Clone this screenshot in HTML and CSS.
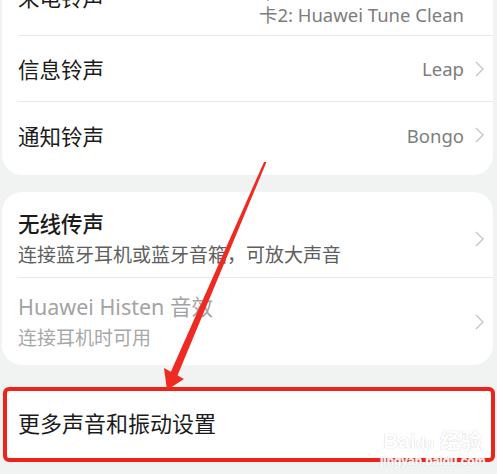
FILE: index.html
```html
<!DOCTYPE html>
<html lang="zh-CN">
<head>
  <meta charset="UTF-8" />
  <meta name="viewport" content="width=device-width, initial-scale=1.0" />
  <title>声音和振动</title>
  <link rel="stylesheet" href="styles.css">
</head>
<body>
  <div class="page">
    <section class="card card-top">
      <div class="row row-first">
        <span class="title">来电铃声</span>
        <div class="values">
          <span class="value">卡1: Huawei Tune Clean</span>
          <span class="value">卡2: Huawei Tune Clean</span>
        </div>
        <svg class="chev" viewBox="0 0 9 16"><path d="M1 1l7 7-7 7" /></svg>
      </div>
      <div class="row">
        <span class="title">信息铃声</span>
        <span class="value">Leap</span>
        <svg class="chev" viewBox="0 0 9 16"><path d="M1 1l7 7-7 7" /></svg>
      </div>
      <div class="row">
        <span class="title">通知铃声</span>
        <span class="value">Bongo</span>
        <svg class="chev" viewBox="0 0 9 16"><path d="M1 1l7 7-7 7" /></svg>
      </div>
    </section>

    <section class="card">
      <div class="row row-tall">
        <div class="text">
          <span class="title">无线传声</span>
          <span class="sub">连接蓝牙耳机或蓝牙音箱，可放大声音</span>
        </div>
        <svg class="chev" viewBox="0 0 9 16"><path d="M1 1l7 7-7 7" /></svg>
      </div>
      <div class="row row-tall disabled">
        <div class="text">
          <span class="title">Huawei Histen 音效</span>
          <span class="sub">连接耳机时可用</span>
        </div>
        <svg class="chev" viewBox="0 0 9 16"><path d="M1 1l7 7-7 7" /></svg>
      </div>
    </section>

    <section class="card card-marked">
      <div class="row row-single">
        <span class="title big">更多声音和振动设置</span>
      </div>
    </section>
  </div>

  <!-- annotazione: freccia rossa -->
  <svg class="arrow" viewBox="0 0 497 474" width="497" height="474">
    <polygon points="264,162 266.5,162 176,379 169,376" />
    <polygon points="167,390 164,368 184,379" />
  </svg>

  <div class="watermark">
    <span class="wm-logo">Bai<b>du</b> 经验</span>
    <span class="wm-url">jingyan.baidu.com</span>
  </div>
</body>
</html>
```

FILE: styles.css
```css
body {
  margin: 0;
  background: #f1f3f3;
  font-family: "Noto Sans", "Noto Sans CJK SC", sans-serif;
  overflow: hidden;
}
.page {
  width: 497px;
  height: 474px;
  overflow: hidden;
}
.card {
  background: #fff;
  border-radius: 20px;
  margin: 17px 4px 0 2px;
  padding: 0 0 0 16px;
}
.card-top {
  margin-top: -30px;
  border-radius: 0 0 20px 20px;
  padding-bottom: 7px;
}
.row {
  display: flex;
  align-items: center;
  height: 66px;
  padding-right: 9px;
  border-bottom: 1px solid #e8e8e8;
  box-sizing: border-box;
}
.row:last-child {
  border-bottom: none;
}
.title {
  font-size: 21.5px;
  color: #1b1b1b;
  flex: 1;
}
.title.big {
  font-size: 22px;
}
.row-first .title {
  margin-bottom: 12px;
}
.values {
  display: flex;
  flex-direction: column;
  align-items: flex-end;
  line-height: 23px;
}
.value {
  font-size: 18.5px;
  color: #7d7d7d;
}
.chev {
  width: 9px;
  height: 16px;
  margin-left: 11px;
  fill: none;
  stroke: #c6c6c6;
  stroke-width: 1.4;
}
.row-first .chev {
  align-self: flex-start;
  margin-top: 2px;
}
.row-tall {
  height: 86px;
  padding-top: 9px;
}
.row-tall:last-child {
  height: 87px;
  padding-top: 0;
}
.text {
  flex: 1;
  display: flex;
  flex-direction: column;
  gap: 5px;
}
.text .title {
  font-weight: 500;
  line-height: 27px;
}
.sub {
  font-size: 19px;
  color: #5e5e5e;
  line-height: 26px;
}
.disabled .title {
  color: #a3a3a3;
  font-weight: normal;
}
.disabled .sub {
  color: #a8a8a8;
}
.card-marked {
  margin: 22px 2px 0 3px;
  border: 4px solid #ee2218;
  border-radius: 6px;
  padding-left: 11px;
}
.row-single {
  height: 67px;
  padding-bottom: 6px;
}
.arrow {
  position: absolute;
  left: 0;
  top: 0;
  pointer-events: none;
  fill: #ee2a22;
}
.watermark {
  position: absolute;
  left: 380px;
  top: 430px;
  display: flex;
  flex-direction: column;
  align-items: center;
  color: #fff;
  font-family: "Liberation Sans", "Noto Sans CJK SC", sans-serif;
  text-shadow: 0 0 1px #d4d4d4, 0 0 1px #d4d4d4;
  opacity: 0.9;
}
.wm-logo {
  font-size: 21px;
  font-weight: bold;
  line-height: 22px;
}
.wm-logo b {
  font-size: 15px;
}
.wm-url {
  font-size: 12px;
  font-weight: bold;
  line-height: 14px;
}
```
